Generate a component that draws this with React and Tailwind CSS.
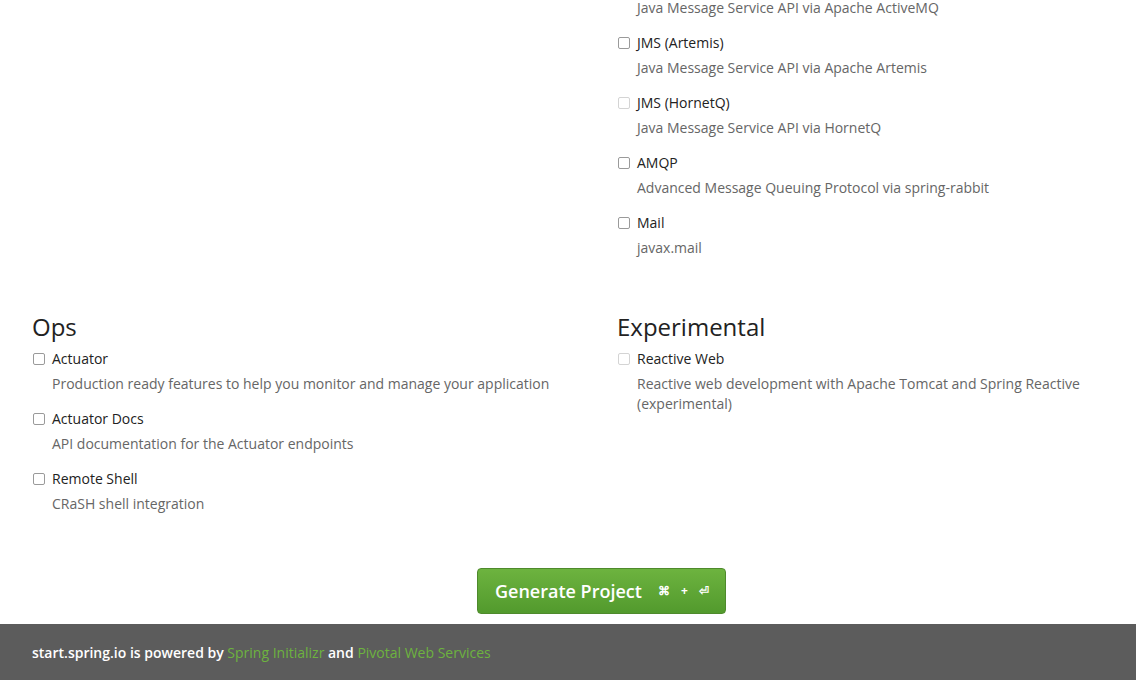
import React from "react";

const messaging = [
  { name: "JMS (Artemis)", desc: "Java Message Service API via Apache Artemis" },
  { name: "JMS (HornetQ)", desc: "Java Message Service API via HornetQ", disabled: true },
  { name: "AMQP", desc: "Advanced Message Queuing Protocol via spring-rabbit" },
  { name: "Mail", desc: "javax.mail" },
];

const ops = [
  { name: "Actuator", desc: "Production ready features to help you monitor and manage your application" },
  { name: "Actuator Docs", desc: "API documentation for the Actuator endpoints" },
  { name: "Remote Shell", desc: "CRaSH shell integration" },
];

const experimental = [
  {
    name: "Reactive Web",
    desc: "Reactive web development with Apache Tomcat and Spring Reactive (experimental)",
    disabled: true,
  },
];

function Dep({ item }) {
  return (
    <div className="mb-[15px]">
      <label className="flex items-center gap-[7px] h-5 text-[14px] leading-5 text-[#222]">
        <span
          className={
            "inline-block w-[12px] h-[12px] ml-[1px] rounded-[2px] border bg-white " +
            (item.disabled ? "border-[#d4d4d4]" : "border-[#9a9a9a]")
          }
        />
        {item.name}
      </label>
      <p className="mt-[5px] pl-[20px] text-[14px] leading-5 text-[#666]">{item.desc}</p>
    </div>
  );
}

function Section({ title, items }) {
  return (
    <div>
      {title && <h2 className="text-[24px] leading-[30px] text-[#222] mb-[7px]">{title}</h2>}
      {items.map((it) => (
        <Dep key={it.name} item={it} />
      ))}
    </div>
  );
}

export default function App() {
  return (
    <div
      className="w-[1136px] h-[680px] overflow-hidden bg-white flex flex-col"
      style={{ fontFamily: '"Open Sans", "Noto Sans", sans-serif' }}
    >
      <div className="px-8">
        <div className="grid grid-cols-[585px_1fr]">
          <div />
          <div>
            {/* tail of JMS (ActiveMQ), scrolled past its label */}
            <p className="pl-[20px] mb-[17px] text-[14px] leading-4 text-[#666]">
              Java Message Service API via Apache ActiveMQ
            </p>
            <Section items={messaging} />
          </div>
        </div>
        <div className="grid grid-cols-[585px_1fr] mt-[39px]">
          <Section title="Ops" items={ops} />
          <Section title="Experimental" items={experimental} />
        </div>
      </div>

      <div className="flex pl-[477px] mt-[39px]">
        <button className="h-[46px] w-[249px] flex items-center pl-[17px] rounded-[4px] border border-[#4e8a2c] bg-gradient-to-b from-[#6db33f] to-[#529a2d] text-white">
          <span className="text-[18px] font-semibold">Generate Project</span>
          <span className="ml-4 text-[12px] font-bold tracking-[4px]">⌘ + ⏎</span>
        </button>
      </div>

      <footer className="mt-auto h-[56px] bg-[#5c5c5c] flex items-center px-8 text-[14px] font-semibold text-white">
        start.spring.io is powered by&nbsp;
        <a className="text-[#6db33f] font-normal">Spring Initializr</a>
        &nbsp;and&nbsp;
        <a className="text-[#6db33f] font-normal">Pivotal Web Services</a>
      </footer>
    </div>
  );
}
